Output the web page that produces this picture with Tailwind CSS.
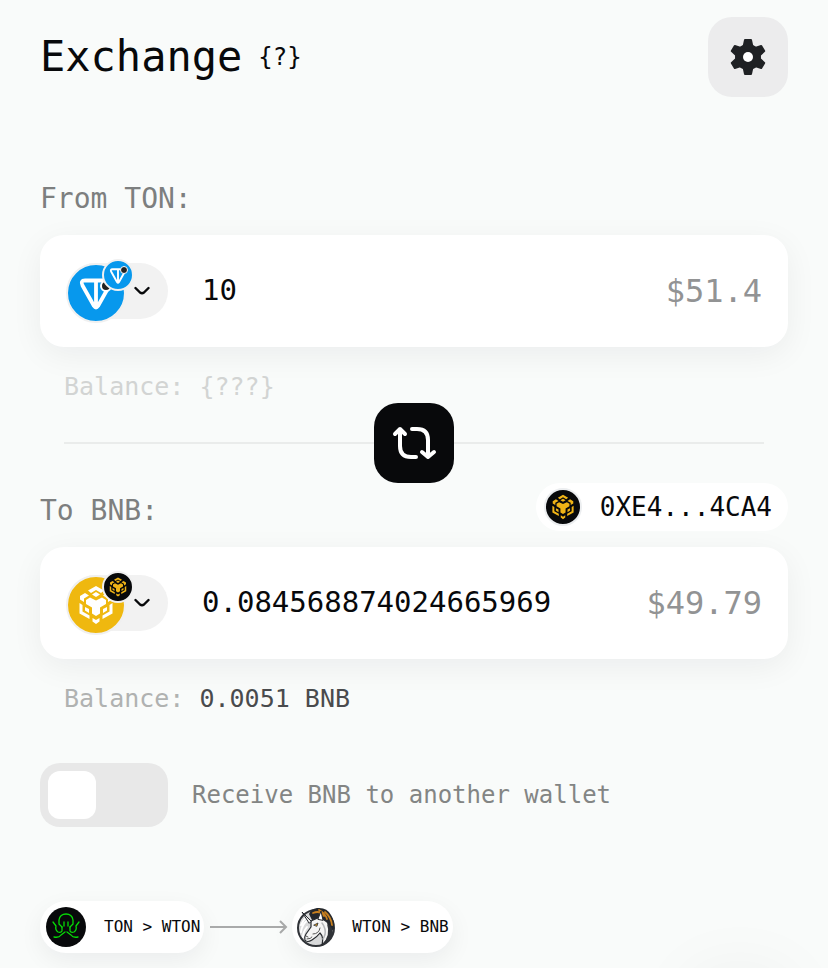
<!DOCTYPE html>
<html lang="en">

<head>
  <meta charset="UTF-8" />
  <meta name="viewport" content="width=device-width, initial-scale=1.0" />
  <title>Exchange</title>
  <script src="https://cdn.jsdelivr.net/npm/@tailwindcss/browser@4"></script>
</head>

<body class="bg-[#f9fbfa] font-['DejaVu_Sans_Mono',monospace] text-[#08090b]">
  <!-- Shared icons -->
  <svg class="hidden" aria-hidden="true">
    <symbol id="bnb" viewBox="0 0 56 56">
      <g fill="currentColor">
        <path d="M28 9l8 4.500-3 2.500-5-3-5 3-3-2.500z" />
        <path d="M28 15l4 2.500-4 2.500-4-2.500z" />
        <path d="M12 19l5-3 4 2.500-5 3V25l-4-2.500z" />
        <path d="M44 19l-5-3-4 2.500 5 3V25l4-2.500z" />
        <path d="M18 23l4-2.500 6 3 6-3 4 2.500v4l-6 3.500v6l-4 2.500-4-2.500v-6l-6-3.500z" />
        <path d="M11.500 26l3 2v6.500l7 4V42l-10-5.500z" />
        <path d="M44.500 26l-3 2v6.500l-7 4V42l10-5.500z" />
        <path d="M17 30l4 2v4l-4-2.500z" />
        <path d="M39 30l-4 2v4l4-2.500z" />
        <path d="M24.500 41l3.500 2 3.500-2v3.500L28 47l-3.500-2.500z" />
      </g>
    </symbol>
    <symbol id="ton" viewBox="0 0 56 56">
      <path d="M17 16.500h22q5 0 2.500 5L30 42q-2 3-4 0L14.500 21.500q-2.500-5 2.500-5zM28 17v25" fill="none"
        stroke="currentColor" stroke-width="3.800" stroke-linejoin="round" />
    </symbol>
  </svg>

  <main class="px-10 pt-[17px] pb-8">
    <!-- Header -->
    <header class="flex items-center justify-between">
      <div class="flex items-center gap-4">
        <h1 class="text-[42px] leading-[80px]">Exchange</h1>
        <button class="text-2xl" aria-label="Help">{?}</button>
      </div>
      <button class="size-20 rounded-3xl bg-[#ececed] flex items-center justify-center" aria-label="Settings">
        <svg class="size-10" viewBox="0 0 40 40" fill="#1f2124" stroke="#1f2124" stroke-width="2"
          stroke-linejoin="round">
          <circle cx="20" cy="20" r="12" />
          <path id="tooth" d="M17 3h6l1.500 7v20L23 37h-6l-1.500-7V10z" />
          <use href="#tooth" transform="rotate(60 20 20)" />
          <use href="#tooth" transform="rotate(120 20 20)" />
          <circle cx="20" cy="20" r="5" fill="#fff" stroke="none" />
        </svg>
      </button>
    </header>

    <!-- From -->
    <div class="mt-[74px] h-12 flex items-end">
      <label for="from" class="text-[28px] leading-10 text-[#7d7f7f]">From TON:</label>
    </div>
    <div class="mt-4 h-28 rounded-3xl bg-white pl-[27px] pr-[26px] flex items-center shadow-[0_8px_32px_rgba(20,20,40,0.06)]">
      <button class="relative shrink-0 w-[101px] h-14 rounded-full bg-[#f2f2f2]" aria-label="Choose TON token">
        <svg class="absolute -left-px top-0 size-[60px]" viewBox="0 0 60 60">
          <circle cx="30" cy="30" r="29" fill="#0798ed" stroke="#f0f0f0" stroke-width="2" />
          <use href="#ton" x="2" y="1" width="56" height="56" class="text-white" />
          <circle cx="40" cy="23" r="5" fill="#222" stroke="#fff" stroke-width="2" />
        </svg>
        <svg class="absolute left-[35px] -top-1 size-8" viewBox="0 0 32 32">
          <circle cx="16" cy="16" r="15" fill="#0798ed" stroke="#f0f0f0" stroke-width="2" />
          <use href="#ton" x="2" y="2" width="28" height="28" class="text-white" />
          <circle cx="22" cy="11" r="3.500" fill="#222" stroke="#fff" />
        </svg>
        <svg class="absolute left-[67px] top-[22px] w-4 h-3" viewBox="0 0 16 12" fill="none" stroke="#08090b"
          stroke-width="2.400" stroke-linecap="round" stroke-linejoin="round">
          <path d="M1.500 3L6 7.500q2 1.500 4 0L14.500 3" />
        </svg>
      </button>
      <input id="from" type="text" value="10" class="ml-[34px] min-w-0 flex-1 text-[29px] bg-transparent outline-none" />
      <span class="text-[32px] text-[#929394]">$51.4</span>
    </div>
    <p class="mt-6 pl-6 text-[25px] leading-8 text-[#d2d4d3]">Balance: {???}</p>

    <!-- Swap direction -->
    <div class="mx-6 flex items-center">
      <div class="h-0.5 flex-1 bg-[#eaeceb]"></div>
      <button class="size-20 rounded-3xl bg-[#08090b]" aria-label="Swap tokens">
        <svg viewBox="0 0 80 80" fill="none" stroke="#fff" stroke-width="4" stroke-linecap="round"
          stroke-linejoin="round">
          <path d="M21 31l5-5 5 5M26 26v17q0 11 11 11h5" />
          <path d="M38 26h5q11 0 11 11v17M48 49l6 5 6-5" />
        </svg>
      </button>
      <div class="h-0.5 flex-1 bg-[#eaeceb]"></div>
    </div>

    <!-- To -->
    <div class="h-12 flex items-end justify-between">
      <label for="to" class="text-[28px] leading-10 text-[#7d7f7f]">To BNB:</label>
      <button class="h-12 rounded-full bg-white pl-2 pr-4 flex items-center gap-[18px] text-[26px]">
        <svg class="size-[38px]" viewBox="0 0 38 38">
          <circle cx="19" cy="19" r="18" fill="#08090b" stroke="#eceef0" stroke-width="2" />
          <use href="#bnb" x="1" y="1" width="36" height="36" class="text-[#f0b416]" />
        </svg>
        0XE4...4CA4
      </button>
    </div>
    <div class="mt-4 h-28 rounded-3xl bg-white pl-[27px] pr-[26px] flex items-center shadow-[0_8px_32px_rgba(20,20,40,0.06)]">
      <button class="relative shrink-0 w-[101px] h-14 rounded-full bg-[#f2f2f2]" aria-label="Choose BNB token">
        <svg class="absolute -left-px top-0 size-[60px]" viewBox="0 0 60 60">
          <circle cx="30" cy="30" r="29" fill="#efb80f" stroke="#f0f0f0" stroke-width="2" />
          <use href="#bnb" x="2" y="2" width="56" height="56" class="text-white" />
        </svg>
        <svg class="absolute left-[35px] -top-1 size-8" viewBox="0 0 32 32">
          <circle cx="16" cy="16" r="15" fill="#08090b" stroke="#f0f0f0" stroke-width="2" />
          <use href="#bnb" x="2" y="2" width="28" height="28" class="text-[#f0b416]" />
        </svg>
        <svg class="absolute left-[67px] top-[22px] w-4 h-3" viewBox="0 0 16 12" fill="none" stroke="#08090b"
          stroke-width="2.400" stroke-linecap="round" stroke-linejoin="round">
          <path d="M1.500 3L6 7.500q2 1.500 4 0L14.500 3" />
        </svg>
      </button>
      <input id="to" type="text" value="0.084568874024665969"
        class="ml-[34px] min-w-0 flex-1 text-[29px] bg-transparent outline-none" />
      <span class="text-[32px] text-[#929394]">$49.79</span>
    </div>
    <p class="mt-6 pl-6 text-[25px] leading-8 text-[#b0b2b1]">Balance: <span class="text-[#4a4b4d]">0.0051 BNB</span></p>

    <!-- Other wallet toggle -->
    <label class="mt-12 flex items-center gap-6 text-2xl text-[#838584]">
      <input type="checkbox"
        class="appearance-none shrink-0 w-32 h-16 p-2 rounded-[20px] bg-[#e8e8e8] before:block before:size-12 before:rounded-xl before:bg-white checked:before:translate-x-16" />
      Receive BNB to another wallet
    </label>

    <!-- Route -->
    <div class="mt-[74px] flex items-center text-base">
      <div class="h-[52px] rounded-full bg-white pl-1.5 pr-1 flex items-center gap-[18px] whitespace-nowrap shadow-[0_8px_24px_rgba(20,20,40,0.06)]">
        <svg class="size-10" viewBox="0 0 40 40">
          <circle cx="20" cy="20" r="20" fill="#08090b" />
          <g fill="none" stroke="#06d906" stroke-width="1.300" stroke-linecap="round" stroke-linejoin="round">
            <path d="M16 20l-3-3v-4q1-6 7-6t7 6v4l-3 3" />
            <path d="M16 20v4q-1 2-4 1-3-2-2-6l-3-4M24 20v4q1 2 4 1 3-2 2-6l3-4" />
            <path d="M8 30q5 1 7-2l4-3M32 30q-5 1-7-2l-4-3" />
            <path d="M18 15v4M22 15v4" />
          </g>
        </svg>
        TON &gt; WTON
      </div>
      <svg class="ml-1.5 mr-1 w-[78px] h-4 shrink-0" viewBox="0 0 78 16" fill="none" stroke="#a9aaaa"
        stroke-width="2">
        <path d="M0 8h76M70 2l6 6-6 6" />
      </svg>
      <div class="h-[52px] rounded-full bg-white px-1 flex items-center gap-4 whitespace-nowrap shadow-[0_8px_24px_rgba(20,20,40,0.06)]">
        <svg class="size-10" viewBox="0 0 40 40" stroke-linejoin="round" stroke-linecap="round">
          <circle cx="20" cy="21" r="18" fill="#d8d9da" stroke="#303338" stroke-width="2" />
          <path d="M5 18q2-5 5-7M5 25q1-8 7-12M7 30q0-5 4-10" fill="none" stroke="#fff" stroke-width="2" />
          <path d="M13 7q2-5 8-6 10-1 14 7 4 6 3 14l-4 3q-2-9-9-13l-9 1z" fill="#25282d" />
          <path d="M17 6q7-3 11 3M23 3q6 3 8 9M29 5q6 5 7 13" fill="none" stroke="#c9801f" stroke-width="1.800" />
          <path d="M15 14l9-4 7 5q5 7 3 15l-8 8q2-8-2-12-3 4-8 7-5 3-7 0-1-3 1-6l5-7z" fill="#f5f5f5"
            stroke="#25282d" stroke-width="1.200" />
          <path d="M31 17q4 11-5 21 9-3 11-12 0-6-6-9z" fill="#303338" />
          <path d="M26 16q4 5 3 12M29 22q1 5-2 10" fill="none" stroke="#b5b7ba" stroke-width="1.500" />
          <path d="M15 14L6 5l7 11z" fill="#eee" stroke="#25282d" />
          <path d="M22 12l3-8 2 9z" fill="#fff" stroke="#25282d" />
          <path d="M18 18l4-2-1 3z" fill="#d39118" stroke="#303338" stroke-width=".8" />
          <path d="M10 29l2 1M11 32q4 0 5-2M17 27q6 0 7-6" fill="none" stroke="#555" />
        </svg>
        WTON &gt; BNB
      </div>
    </div>
  </main>

  <!-- Support button, tucked under the fold -->
  <button class="fixed -bottom-24 right-12 size-20 rounded-full bg-[#08090b] shadow-[0_0_80px_rgba(20,20,40,0.1)]" aria-label="Support"></button>
</body>

</html>
